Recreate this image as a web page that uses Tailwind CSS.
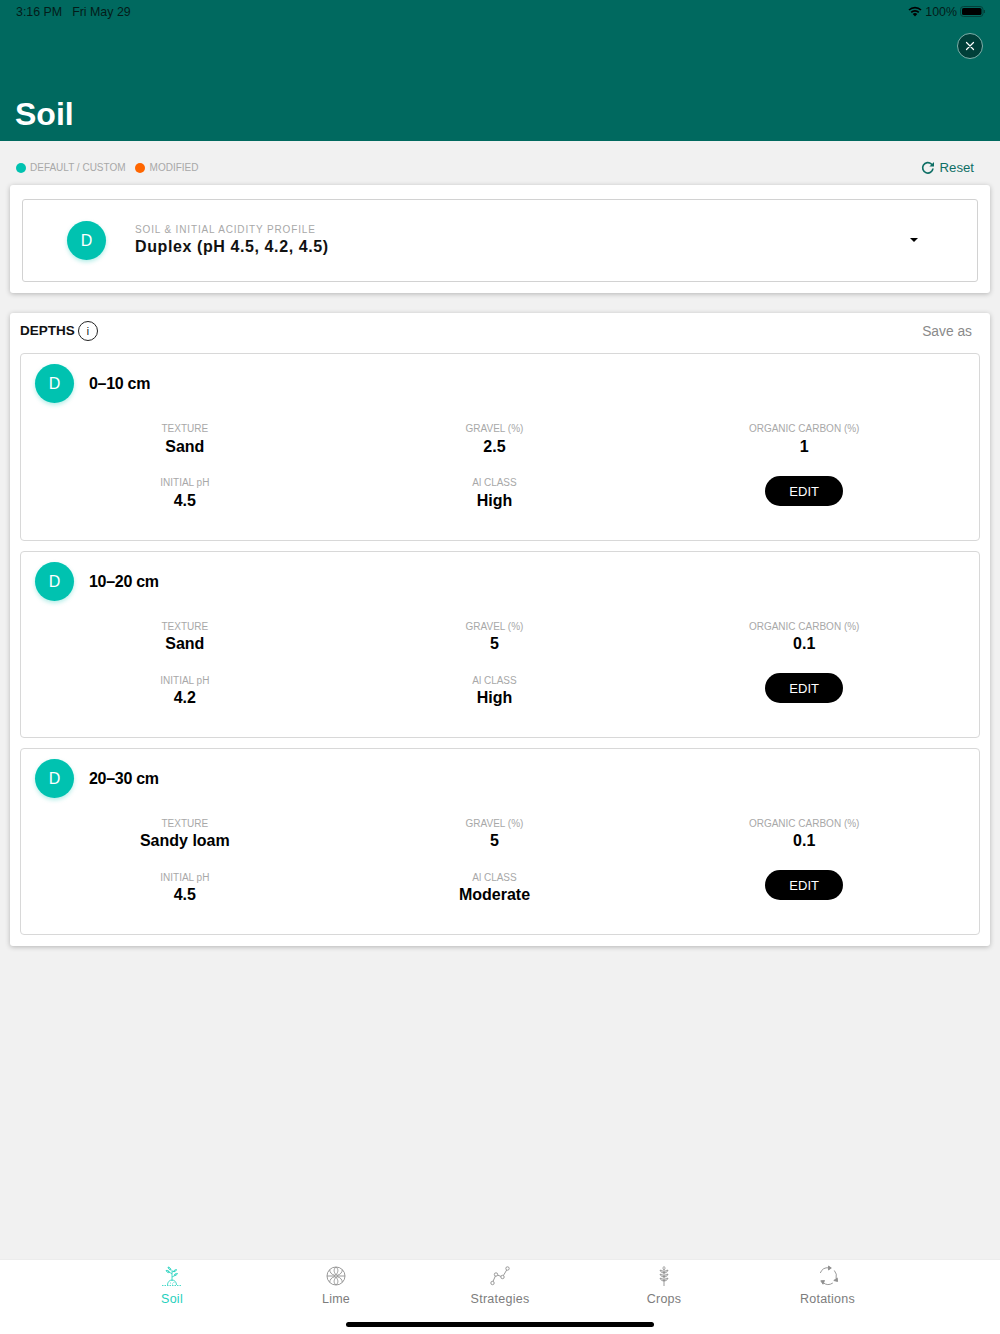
<!DOCTYPE html>
<html><head><meta charset="utf-8"><script src="https://cdn.jsdelivr.net/npm/@tailwindcss/browser@4"></script></head>
<body class="m-0">
<div class="w-[1000px] h-[1334px] bg-[#f1f1f1] flex flex-col overflow-hidden font-['Liberation_Sans',Arial,sans-serif] text-black">
  <!-- header -->
  <header class="h-[141px] bg-[#00695f] flex flex-col shrink-0">
    <div class="h-[24px] pl-4 pr-[15px] flex items-center justify-between text-[12.4px] text-[#041c19]">
      <div class="flex gap-[10px]"><span>3:16 PM</span><span>Fri May 29</span></div>
      <div class="flex items-center gap-[3px]">
        <svg width="14" height="11" viewBox="0 0 14 11"><path d="M7 10.500 4.700 8a3.300 3.300 0 0 1 4.600 0Z" fill="#000"/><path d="M3.200 6.400a5.400 5.400 0 0 1 7.600 0M1 4a8.600 8.600 0 0 1 12 0" fill="none" stroke="#000" stroke-width="1.700"/></svg>
        <span>100%</span>
        <svg width="25" height="11" viewBox="0 0 25 11"><rect x="0.500" y="0.500" width="22.500" height="10" rx="3" fill="none" stroke="#03403a"/><rect x="2" y="2" width="19.500" height="7" rx="1.600" fill="#000"/><rect x="23.800" y="4" width="1.200" height="3" fill="#03403a"/></svg>
      </div>
    </div>
    <div class="flex justify-end pr-[17px] pt-[9px]">
      <div class="w-[26px] h-[26px] rounded-full bg-[#003f39] border border-[#7fb0aa] flex items-center justify-center">
        <svg width="10" height="10" viewBox="0 0 10 10"><path d="M1.500 1.500l7 7M8.500 1.500l-7 7" stroke="#fff" stroke-width="1.200" stroke-linecap="round"/></svg>
      </div>
    </div>
    <h1 class="mt-[35px] pl-[15px] text-[32px] leading-[40px] font-bold text-white">Soil</h1>
  </header>

  <!-- legend -->
  <div class="h-[44px] shrink-0 pl-4 pr-[26px] flex items-center justify-between">
    <div class="flex items-center text-[10px] text-[#a8a8a8] mt-[9px]">
      <span class="w-[10px] h-[10px] rounded-full bg-[#00c2b0]"></span><span class="ml-[4px]">DEFAULT / CUSTOM</span>
      <span class="w-[10px] h-[10px] rounded-full bg-[#ff6600] ml-[9px]"></span><span class="ml-[5px]">MODIFIED</span>
    </div>
    <div class="flex items-center gap-[5px] text-[13.2px] text-[#0e6f65] mt-[10px]">
      <svg width="14" height="14" viewBox="0 0 14 14"><path d="M12 7.500A5.200 5.200 0 1 1 10.400 3L12 4.600" fill="none" stroke="#0e6f65" stroke-width="1.700"/><path d="M13 1v4.600H8.400Z" fill="#0e6f65"/></svg>
      <span>Reset</span>
    </div>
  </div>

  <!-- profile -->
  <section class="mx-[10px] h-[108px] shrink-0 bg-white rounded-[3px] shadow-[0_1px_5px_rgba(0,0,0,0.25)] px-3 pt-[14px]">
    <div class="h-[83px] border border-[#d2d2d2] rounded-[3px] flex items-center pl-[44px] pr-[59px]">
      <div class="w-[39px] h-[39px] rounded-full bg-[#00c2b0] shadow-[0_2px_4px_rgba(0,194,176,0.3)] text-white text-[16px] flex items-center justify-center">D</div>
      <div class="ml-[29px] flex-1">
        <div class="text-[10px] leading-[13px] tracking-[0.85px] text-[#a8a8a8]">SOIL &amp; INITIAL ACIDITY PROFILE</div>
        <div class="text-[16px] leading-[22px] font-bold tracking-[0.6px] text-[#111]">Duplex (pH 4.5, 4.2, 4.5)</div>
      </div>
      <div class="w-0 h-0 -mt-[2px] border-x-[4px] border-x-transparent border-t-[4px] border-t-black"></div>
    </div>
  </section>

  <!-- depths -->
  <section class="mx-[10px] mt-[20px] h-[633px] shrink-0 bg-white rounded-[3px] shadow-[0_1px_5px_rgba(0,0,0,0.25)] px-[10px]">
    <div class="h-[40px] flex items-center justify-between pr-2">
      <div class="flex items-center gap-[3px] -mt-[4px]">
        <span class="text-[13.5px] font-bold text-[#111]">DEPTHS</span>
        <span class="w-[20px] h-[20px] rounded-full border border-[#222] flex items-center justify-center text-[10px]">i</span>
      </div>
      <span class="text-[13.8px] text-[#8a8a8a] -mt-[2px]">Save as</span>
    </div>

    <div class="flex flex-col gap-[10px]">
      <div class="h-[188px] border border-[#d8d8d8] rounded-[4px] pt-[10px] pl-[14px]">
        <div class="flex items-center gap-[15px]">
          <div class="w-[39px] h-[39px] rounded-full bg-[#00c2b0] shadow-[0_2px_4px_rgba(0,194,176,0.3)] text-white text-[16px] flex items-center justify-center">D</div>
          <div class="text-[16px] tracking-[-0.3px] font-bold">0–10 cm</div>
        </div>
        <div class="grid grid-cols-3 w-[929px] -ml-[5px] mt-[19px] text-center text-[10px] leading-[13px] text-[#a8a8a8]">
          <div class="h-[54px]">TEXTURE<div class="text-[16px] leading-[24px] font-bold text-black">Sand</div></div>
          <div class="h-[54px]">GRAVEL (%)<div class="text-[16px] leading-[24px] font-bold text-black">2.5</div></div>
          <div class="h-[54px]">ORGANIC CARBON (%)<div class="text-[16px] leading-[24px] font-bold text-black">1</div></div>
          <div>INITIAL pH<div class="text-[16px] leading-[24px] font-bold text-black">4.5</div></div>
          <div>Al CLASS<div class="text-[16px] leading-[24px] font-bold text-black">High</div></div>
          <div class="flex justify-center"><div class="w-[78px] h-[30px] rounded-full bg-black text-white text-[13px] flex items-center justify-center">EDIT</div></div>
        </div>
      </div>

      <div class="h-[187px] border border-[#d8d8d8] rounded-[4px] pt-[10px] pl-[14px]">
        <div class="flex items-center gap-[15px]">
          <div class="w-[39px] h-[39px] rounded-full bg-[#00c2b0] shadow-[0_2px_4px_rgba(0,194,176,0.3)] text-white text-[16px] flex items-center justify-center">D</div>
          <div class="text-[16px] tracking-[-0.3px] font-bold">10–20 cm</div>
        </div>
        <div class="grid grid-cols-3 w-[929px] -ml-[5px] mt-[19px] text-center text-[10px] leading-[13px] text-[#a8a8a8]">
          <div class="h-[54px]">TEXTURE<div class="text-[16px] leading-[22px] font-bold text-black">Sand</div></div>
          <div class="h-[54px]">GRAVEL (%)<div class="text-[16px] leading-[22px] font-bold text-black">5</div></div>
          <div class="h-[54px]">ORGANIC CARBON (%)<div class="text-[16px] leading-[22px] font-bold text-black">0.1</div></div>
          <div>INITIAL pH<div class="text-[16px] leading-[22px] font-bold text-black">4.2</div></div>
          <div>Al CLASS<div class="text-[16px] leading-[22px] font-bold text-black">High</div></div>
          <div class="flex justify-center"><div class="w-[78px] h-[30px] -mt-[1px] rounded-full bg-black text-white text-[13px] flex items-center justify-center">EDIT</div></div>
        </div>
      </div>

      <div class="h-[187px] border border-[#d8d8d8] rounded-[4px] pt-[10px] pl-[14px]">
        <div class="flex items-center gap-[15px]">
          <div class="w-[39px] h-[39px] rounded-full bg-[#00c2b0] shadow-[0_2px_4px_rgba(0,194,176,0.3)] text-white text-[16px] flex items-center justify-center">D</div>
          <div class="text-[16px] tracking-[-0.3px] font-bold">20–30 cm</div>
        </div>
        <div class="grid grid-cols-3 w-[929px] -ml-[5px] mt-[19px] text-center text-[10px] leading-[13px] text-[#a8a8a8]">
          <div class="h-[54px]">TEXTURE<div class="text-[16px] leading-[22px] font-bold text-black">Sandy loam</div></div>
          <div class="h-[54px]">GRAVEL (%)<div class="text-[16px] leading-[22px] font-bold text-black">5</div></div>
          <div class="h-[54px]">ORGANIC CARBON (%)<div class="text-[16px] leading-[22px] font-bold text-black">0.1</div></div>
          <div>INITIAL pH<div class="text-[16px] leading-[22px] font-bold text-black">4.5</div></div>
          <div>Al CLASS<div class="text-[16px] leading-[22px] font-bold text-black">Moderate</div></div>
          <div class="flex justify-center"><div class="w-[78px] h-[30px] -mt-[1px] rounded-full bg-black text-white text-[13px] flex items-center justify-center">EDIT</div></div>
        </div>
      </div>
    </div>
  </section>

  <div class="flex-1"></div>

  <!-- tab bar -->
  <nav class="h-[75px] shrink-0 bg-white border-t border-[#ececec] flex flex-col items-center">
    <div class="w-[820px] grid grid-cols-5 pt-[5px] text-[12.5px] tracking-[0.25px] text-[#7d7d7d] text-center">
      <div class="flex flex-col items-center gap-[3px] text-[#1fd0bd]">
        <svg width="22" height="22" viewBox="0 0 22 22" fill="none" stroke="#1fd0bd" stroke-width="0.8"><path d="M11 16V5M11 9 7 6M11 12l4-2M11 7l3-1"/><path d="M7 2c1.500 0 3 1.500 3 3-1.500 0-3-1.500-3-3ZM5 5.500c1.500-.5 3 .5 3.500 2-1.500.5-3-.5-3.500-2ZM15.500 4.500c0 1.200-1.200 2.200-2.800 2.200 0-1.200 1.200-2.200 2.800-2.200ZM16.500 8.500c-.3 1.300-1.800 2-3.300 1.700.3-1.300 1.800-2 3.300-1.700Z" fill="#1fd0bd" fill-opacity="0.35"/><path d="M6.500 20c0-3 2-5 4.500-5s4.500 2 4.500 5"/><path d="M1 20.500h20" stroke-dasharray="1.500 1"/><path d="M9 18h.8M12.500 17.500h.8M11 19h.8"/></svg>
        <span>Soil</span>
      </div>
      <div class="flex flex-col items-center gap-[3px]">
        <svg width="22" height="22" viewBox="0 0 22 22" fill="none" stroke="#8f8f8f" stroke-width="0.9"><circle cx="11" cy="11" r="9"/><circle cx="11" cy="11" r="1.300"/><path d="M11 9.700C8.500 7 8.500 4 11 2c2.500 2 2.500 5 0 7.700ZM11 12.300C8.500 15 8.500 18 11 20c2.500-2 2.500-5 0-7.700ZM9.900 10.400C6.500 9.500 4.800 7.500 4.700 4.600M12.100 10.400c3.400-.9 5.100-2.900 5.200-5.800M9.900 11.600c-3.400.9-5.100 2.900-5.200 5.800M12.100 11.600c3.400.9 5.100 2.900 5.200 5.800M9.700 11H2M12.300 11H20"/></svg>
        <span>Lime</span>
      </div>
      <div class="flex flex-col items-center gap-[3px]">
        <svg width="22" height="22" viewBox="0 0 22 22" fill="none" stroke="#8f8f8f" stroke-width="0.9"><circle cx="3.500" cy="18" r="1.700"/><circle cx="7" cy="9.500" r="1.700"/><circle cx="13.500" cy="12" r="1.700"/><circle cx="18.500" cy="3.500" r="1.700"/><path d="M4 16.400 6.400 11M8.600 10.100l3.300 1.300M14.400 10.500l3.300-5.500"/></svg>
        <span>Strategies</span>
      </div>
      <div class="flex flex-col items-center gap-[3px]">
        <svg width="22" height="22" viewBox="0 0 22 22" fill="none" stroke="#8f8f8f" stroke-width="0.9"><path d="M11 5v16M11 1.500c1.300 1 1.300 2.500 0 3.500-1.300-1-1.300-2.500 0-3.500Z"/><path d="M11 8C9.500 8 7.500 7 7 5.200c1.800 0 3.700 1 4 2.800ZM11 8c1.500 0 3.500-1 4-2.800-1.800 0-3.700 1-4 2.800ZM11 12c-1.500 0-3.500-1-4-2.800 1.800 0 3.700 1 4 2.800ZM11 12c1.500 0 3.500-1 4-2.800-1.800 0-3.700 1-4 2.800ZM11 16c-1.500 0-3.500-1-4-2.800 1.800 0 3.700 1 4 2.800ZM11 16c1.500 0 3.500-1 4-2.800-1.800 0-3.700 1-4 2.800Z" fill="#8f8f8f" fill-opacity="0.25"/></svg>
        <span>Crops</span>
      </div>
      <div class="flex flex-col items-center gap-[3px] -ml-[1px]">
        <svg width="22" height="22" viewBox="0 0 22 22" fill="none" stroke="#8f8f8f" stroke-width="0.9"><path d="M3.300 8A8.300 8.300 0 0 1 12 2.800M17.300 5.500a8.300 8.300 0 0 1 1.800 7.800M15.800 18a8.300 8.300 0 0 1-9.800-.4"/><path d="M11.500 1 14.300 3 11.500 5ZM16.800 15.500l3.400-2.600.4 3.600ZM7.500 15.500 3.800 15.800l2.200 3.400Z" fill="#8f8f8f"/></svg>
        <span>Rotations</span>
      </div>
    </div>
    <div class="mt-[13px] w-[308px] h-[5px] rounded-full bg-black"></div>
  </nav>
</div>
</body></html>
